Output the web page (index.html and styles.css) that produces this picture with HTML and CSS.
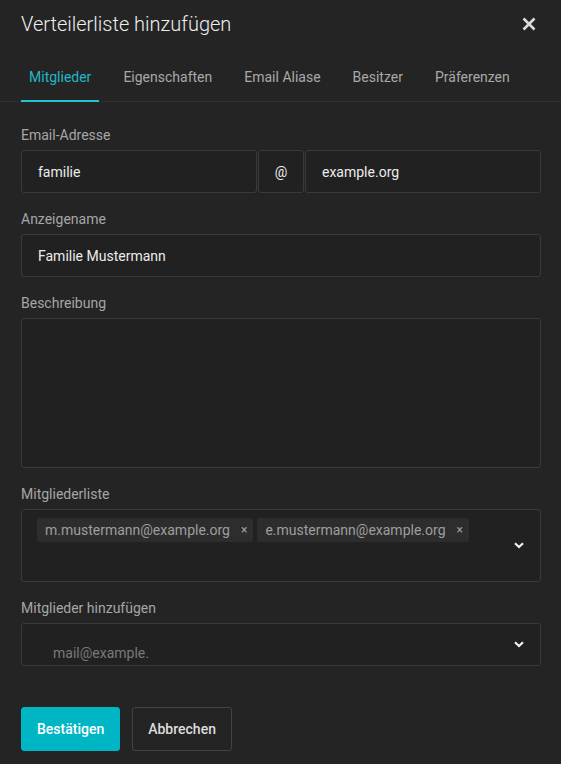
FILE: index.html
```html
<!DOCTYPE html>
<html lang="de">
<head>
<meta charset="utf-8">
<title>Verteilerliste hinzufügen</title>
<link rel="stylesheet" href="styles.css">
</head>
<body>
<div class="dialog">
  <div class="header">
    <h1 class="title">Verteilerliste hinzufügen</h1>
    <button class="close" aria-label="Schließen">
      <svg width="14" height="14" viewBox="0 0 14 14"><path d="M1.5 1.5 L12.5 12.5 M12.5 1.5 L1.5 12.5" stroke="#dcdcdc" stroke-width="2.6" stroke-linecap="butt" fill="none"/></svg>
    </button>
  </div>
  <nav class="tabs">
    <span class="tab active">Mitglieder</span>
    <span class="tab">Eigenschaften</span>
    <span class="tab">Email Aliase</span>
    <span class="tab">Besitzer</span>
    <span class="tab">Präferenzen</span>
  </nav>
  <form class="form">
    <div class="field">
      <label class="label">Email-Adresse</label>
      <div class="email-row">
        <div class="input grow">familie</div>
        <div class="input at">@</div>
        <div class="input grow">example.org</div>
      </div>
    </div>
    <div class="field">
      <label class="label">Anzeigename</label>
      <div class="input">Familie Mustermann</div>
    </div>
    <div class="field">
      <label class="label">Beschreibung</label>
      <div class="input textarea"></div>
    </div>
    <div class="field">
      <label class="label">Mitgliederliste</label>
      <div class="input multi">
        <div class="chips">
          <span class="chip">m.mustermann@example.org<span class="chip-x">×</span></span>
          <span class="chip">e.mustermann@example.org<span class="chip-x">×</span></span>
        </div>
        <svg class="chevron" width="10" height="7" viewBox="0 0 10 7"><path d="M1 1.2 L5 5 L9 1.2" stroke="#f2f2f2" stroke-width="2.2" fill="none"/></svg>
      </div>
    </div>
    <div class="field">
      <label class="label">Mitglieder hinzufügen</label>
      <div class="input add">
        <span class="placeholder">mail@example.</span>
        <svg class="chevron" width="10" height="7" viewBox="0 0 10 7"><path d="M1 1.2 L5 5 L9 1.2" stroke="#f2f2f2" stroke-width="2.2" fill="none"/></svg>
      </div>
    </div>
    <div class="actions">
      <button type="button" class="btn primary">Bestätigen</button>
      <button type="button" class="btn secondary">Abbrechen</button>
    </div>
  </form>
</div>
</body>
</html>
```

FILE: styles.css
```css
* { box-sizing: border-box; }
html, body {
  margin: 0;
  background: #242424;
  font-family: Roboto, "Liberation Sans", sans-serif;
  font-size: 14px;
  color: #e6e6e6;
}
.dialog {
  width: 561px;
  height: 764px;
  background: #242424;
}
.header {
  display: flex;
  align-items: center;
  justify-content: space-between;
  padding: 12px 25px 0 21px;
  height: 36px;
}
.title {
  margin: 0;
  font-size: 20px;
  font-weight: 300;
  line-height: 24px;
  color: #eeeeee;
}
.close {
  background: none;
  border: 0;
  padding: 0;
  width: 14px;
  height: 14px;
  display: flex;
}
.tabs {
  margin-top: 18px;
  display: flex;
  gap: 16px;
  padding-left: 21px;
  border-bottom: 1px solid #313131;
  height: 48px;
}
.tab {
  position: relative;
  padding: 0 8px;
  line-height: 47px;
  color: #a9a9a9;
  font-size: 14px;
}
.tab.active { color: #21b7c7; }
.tab.active::after {
  content: "";
  position: absolute;
  left: 0;
  right: 0;
  bottom: -1px;
  height: 2px;
  background: #26c2d0;
}
.form {
  padding: 23px 20px 0 21px;
}
.field { margin-bottom: 16px; }
.label {
  display: block;
  line-height: 20px;
  margin-bottom: 5px;
  color: #a6a6a6;
}
.input {
  height: 43px;
  border: 1px solid #3a3a3a;
  border-radius: 3px;
  background: #212121;
  padding: 0 16px;
  display: flex;
  align-items: center;
  color: #ececec;
  line-height: 20px;
}
.email-row {
  display: flex;
  gap: 1px;
}
.grow { flex: 1; }
.at {
  width: 46px;
  padding: 0;
  justify-content: center;
}
.textarea { height: 150px; }
.multi {
  height: 73px;
  align-items: flex-start;
  padding: 8px 15px 0 15px;
}
.chips {
  flex: 1;
  display: flex;
  gap: 4px;
}
.chip {
  display: flex;
  align-items: center;
  height: 24px;
  padding: 0 6px 0 8px;
  background: #2d2d2d;
  color: #9e9e9e;
  border-radius: 2px;
}
.chip-x {
  margin-left: 11px;
  font-size: 12px;
  color: #a0a0a0;
}
.multi .chevron { align-self: center; margin-top: -8px; }
.chevron { flex: none; margin-right: 1px; }
.add {
  justify-content: space-between;
  padding: 0 15px 0 31px;
}
.placeholder {
  align-self: flex-end;
  margin-bottom: 2px;
  color: #7a7a7a;
}
.actions {
  margin-top: 41px;
  display: flex;
  gap: 12px;
}
.btn {
  height: 44px;
  padding: 0 15px;
  border-radius: 3px;
  font-family: Roboto, "Liberation Sans", sans-serif;
  font-size: 14px;
  font-weight: 500;
}
.primary {
  background: #00b6c4;
  border: 1px solid #00b6c4;
  color: #ffffff;
}
.secondary {
  background: transparent;
  border: 1px solid #434343;
  color: #dddddd;
}
```
